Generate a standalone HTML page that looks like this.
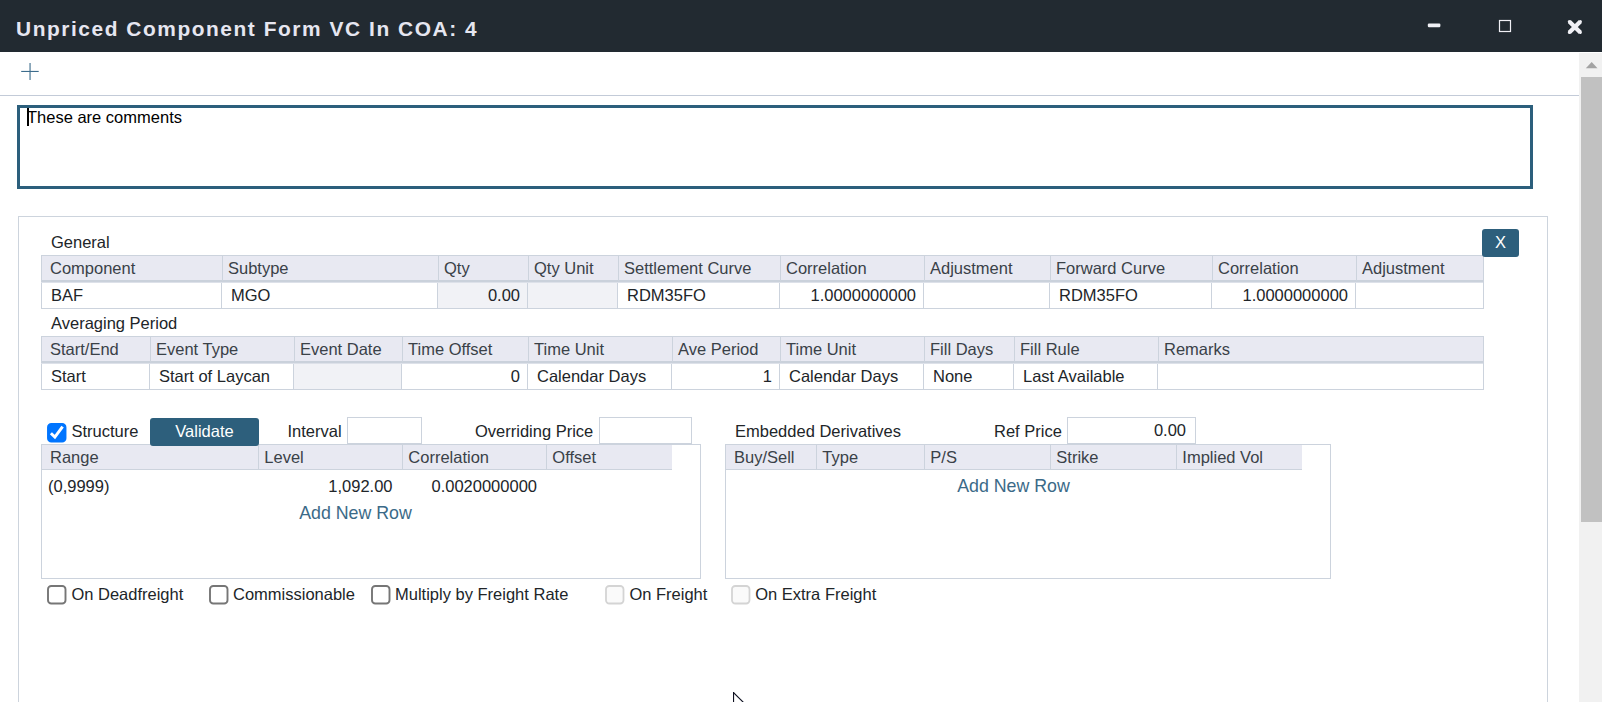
<!DOCTYPE html>
<html><head><meta charset="utf-8"><title>Unpriced Component Form VC In COA: 4</title>
<style>
html,body{margin:0;padding:0;}
body{width:1602px;height:702px;overflow:hidden;background:#fff;position:relative;font-family:"Liberation Sans",Arial,sans-serif;font-size:16.5px;color:#212529;}
.abs{position:absolute;}
.t{position:absolute;white-space:nowrap;line-height:20px;}
#titlebar{left:0;top:0;width:1602px;height:52px;background:#222a31;}
#title{left:16px;top:17px;font-size:20.9px;font-weight:bold;letter-spacing:1.555px;color:#e6e6f0;line-height:24px;}
#scroll{left:1579px;top:53px;width:23px;height:649px;background:#f1f1f1;}
#thumb{left:1581px;top:77px;width:21px;height:445px;background:#c1c1c1;}
#tline{left:0;top:95px;width:1579px;height:1px;background:#c3cbd8;}
#ta{left:17px;top:105px;width:1510px;height:78px;border:3px solid #2c5f7c;}
#panel{left:18px;top:216px;width:1528px;height:500px;border:1px solid #cdd4dd;}
table.g{position:absolute;border-collapse:collapse;table-layout:fixed;}
table.g th{background:#e8e9f2;font-weight:normal;text-align:left;color:#3a4148;border:1px solid #ccd3dd;border-bottom:3px solid #ccd3dd;height:23px;padding:0 0 0 8px;line-height:23px;white-space:nowrap;overflow:hidden;}
table.g td{border:1px solid #ccd3dd;height:25px;padding:0 0 0 9px;line-height:25px;color:#212529;white-space:nowrap;overflow:hidden;}
table.g td.r{text-align:right;padding:0 7px 0 0;}
table.g td.d{background:#f1f2f6;}
.btn{position:absolute;background:#2d5f7c;color:#fff;border-radius:3px;text-align:center;}
.inp{position:absolute;border:1px solid #ccd3dd;background:#fff;box-sizing:border-box;}
.box{position:absolute;border:1px solid #ccd3dd;box-sizing:border-box;}
.hd{position:absolute;background:#e8e9f2;height:24px;border-bottom:1px solid #ccd3dd;}
.hc{position:absolute;top:0;height:24px;line-height:25px;color:#3a4148;box-sizing:border-box;border-left:1px solid #ccd3dd;padding-left:5.3px;white-space:nowrap;}
.cb{position:absolute;width:15.6px;height:15.6px;border:1.9px solid #767676;border-radius:4px;background:#fff;box-sizing:content-box;}
.cb.dis{border-color:#cfcfcf;background:#f8f8f8;}
.cb.on{background:#0d6efd;border-color:#0d6efd;}
.th{color:#3a4148;}
.link{color:#3b6a88;font-size:17.8px;}
</style></head><body>
<div class="abs" id="titlebar"></div>
<div class="t" id="title">Unpriced Component Form VC In COA: 4</div>
<!-- window controls -->
<svg class="abs" style="left:1420px;top:10px" width="175" height="34" viewBox="1420 10 175 34">
<rect x="1427.8" y="23.5" width="12.6" height="3.8" rx="1.2" fill="#f0f0f5"/>
<rect x="1499.5" y="20.5" width="11" height="11" fill="none" stroke="#f0f0f5" stroke-width="1.2"/>
<path d="M1569.3 21.6 L1580.4 32.4 M1580.4 21.6 L1569.3 32.4" stroke="#f0f0f5" stroke-width="4.2" stroke-linecap="butt" fill="none"/><path d="M1569.3 21.6 L1580.4 32.4 M1580.4 21.6 L1569.3 32.4" stroke="#f0f0f5" stroke-width="3" stroke-linecap="round" fill="none"/>
</svg>
<div class="abs" id="scroll"></div>
<div class="abs" id="thumb"></div>
<svg class="abs" style="left:1583px;top:60px" width="16" height="10" viewBox="1583 60 16 10"><path d="M1585.8 68.3 L1591.7 62 L1597.5 68.3 Z" fill="#a3a3a3"/></svg>
<!-- toolbar -->
<svg class="abs" style="left:20px;top:62px" width="20" height="20" viewBox="20 62 20 20"><rect x="29.5" y="63" width="1.1" height="17" fill="#3c6c8c"/><rect x="21.2" y="70.9" width="17.5" height="1.1" fill="#3c6c8c"/></svg>
<div class="abs" id="tline"></div>
<div class="abs" id="ta"></div>
<div class="abs" style="left:27px;top:108px;width:1.6px;height:18px;background:#000"></div>
<div class="t" style="left:27px;top:107px;color:#000">These are comments</div>
<div class="abs" id="panel"></div>
<div class="t" style="left:51px;top:232px">General</div>
<div class="btn" style="left:1482px;top:229px;width:37px;height:28px;line-height:26px;z-index:3">X</div>
<div class="abs" style="left:41px;top:255px;width:1443px;height:25px;background:#e8e9f2;border-top:1px solid #ccd3dd;box-sizing:border-box"></div>
<div class="abs" style="left:41px;top:280px;width:1443px;height:3px;background:linear-gradient(#cad1db 0,#cad1db 70%,#dde1e9 70%)"></div>
<div class="abs" style="left:41px;top:308px;width:1443px;height:1px;background:#ccd3dd"></div>
<div class="abs" style="left:41px;top:255px;width:1px;height:26px;background:#ccd3dd"></div>
<div class="t th" style="left:50px;top:258px">Component</div>
<div class="abs" style="left:41px;top:283px;width:180px;height:25px;border-left:1px solid #ccd3dd;box-sizing:border-box;"></div>
<div class="t" style="left:51px;top:285px">BAF</div>
<div class="abs" style="left:222px;top:255px;width:1px;height:26px;background:#ccd3dd"></div>
<div class="t th" style="left:228px;top:258px">Subtype</div>
<div class="abs" style="left:221px;top:283px;width:216px;height:25px;border-left:1px solid #ccd3dd;box-sizing:border-box;"></div>
<div class="t" style="left:231px;top:285px">MGO</div>
<div class="abs" style="left:438px;top:255px;width:1px;height:26px;background:#ccd3dd"></div>
<div class="t th" style="left:444px;top:258px">Qty</div>
<div class="abs" style="left:437px;top:283px;width:90px;height:25px;border-left:1px solid #ccd3dd;box-sizing:border-box;background:#f1f2f6;"></div>
<div class="t" style="left:437px;top:285px;width:83px;text-align:right">0.00</div>
<div class="abs" style="left:528px;top:255px;width:1px;height:26px;background:#ccd3dd"></div>
<div class="t th" style="left:534px;top:258px">Qty Unit</div>
<div class="abs" style="left:527px;top:283px;width:90px;height:25px;border-left:1px solid #ccd3dd;box-sizing:border-box;background:#f1f2f6;"></div>
<div class="abs" style="left:618px;top:255px;width:1px;height:26px;background:#ccd3dd"></div>
<div class="t th" style="left:624px;top:258px">Settlement Curve</div>
<div class="abs" style="left:617px;top:283px;width:162px;height:25px;border-left:1px solid #ccd3dd;box-sizing:border-box;"></div>
<div class="t" style="left:627px;top:285px">RDM35FO</div>
<div class="abs" style="left:780px;top:255px;width:1px;height:26px;background:#ccd3dd"></div>
<div class="t th" style="left:786px;top:258px">Correlation</div>
<div class="abs" style="left:779px;top:283px;width:144px;height:25px;border-left:1px solid #ccd3dd;box-sizing:border-box;"></div>
<div class="t" style="left:779px;top:285px;width:137px;text-align:right">1.0000000000</div>
<div class="abs" style="left:924px;top:255px;width:1px;height:26px;background:#ccd3dd"></div>
<div class="t th" style="left:930px;top:258px">Adjustment</div>
<div class="abs" style="left:923px;top:283px;width:126px;height:25px;border-left:1px solid #ccd3dd;box-sizing:border-box;"></div>
<div class="abs" style="left:1050px;top:255px;width:1px;height:26px;background:#ccd3dd"></div>
<div class="t th" style="left:1056px;top:258px">Forward Curve</div>
<div class="abs" style="left:1049px;top:283px;width:162px;height:25px;border-left:1px solid #ccd3dd;box-sizing:border-box;"></div>
<div class="t" style="left:1059px;top:285px">RDM35FO</div>
<div class="abs" style="left:1212px;top:255px;width:1px;height:26px;background:#ccd3dd"></div>
<div class="t th" style="left:1218px;top:258px">Correlation</div>
<div class="abs" style="left:1211px;top:283px;width:144px;height:25px;border-left:1px solid #ccd3dd;box-sizing:border-box;"></div>
<div class="t" style="left:1211px;top:285px;width:137px;text-align:right">1.0000000000</div>
<div class="abs" style="left:1356px;top:255px;width:1px;height:26px;background:#ccd3dd"></div>
<div class="t th" style="left:1362px;top:258px">Adjustment</div>
<div class="abs" style="left:1355px;top:283px;width:128px;height:25px;border-left:1px solid #ccd3dd;box-sizing:border-box;"></div>
<div class="abs" style="left:1483px;top:255px;width:1px;height:54px;background:#ccd3dd"></div>
<div class="t" style="left:51px;top:313px">Averaging Period</div>
<div class="abs" style="left:41px;top:336px;width:1443px;height:25px;background:#e8e9f2;border-top:1px solid #ccd3dd;box-sizing:border-box"></div>
<div class="abs" style="left:41px;top:361px;width:1443px;height:3px;background:linear-gradient(#cad1db 0,#cad1db 70%,#dde1e9 70%)"></div>
<div class="abs" style="left:41px;top:389px;width:1443px;height:1px;background:#ccd3dd"></div>
<div class="abs" style="left:41px;top:336px;width:1px;height:26px;background:#ccd3dd"></div>
<div class="t th" style="left:50px;top:339px">Start/End</div>
<div class="abs" style="left:41px;top:364px;width:108px;height:25px;border-left:1px solid #ccd3dd;box-sizing:border-box;"></div>
<div class="t" style="left:51px;top:366px">Start</div>
<div class="abs" style="left:150px;top:336px;width:1px;height:26px;background:#ccd3dd"></div>
<div class="t th" style="left:156px;top:339px">Event Type</div>
<div class="abs" style="left:149px;top:364px;width:144px;height:25px;border-left:1px solid #ccd3dd;box-sizing:border-box;"></div>
<div class="t" style="left:159px;top:366px">Start of Laycan</div>
<div class="abs" style="left:294px;top:336px;width:1px;height:26px;background:#ccd3dd"></div>
<div class="t th" style="left:300px;top:339px">Event Date</div>
<div class="abs" style="left:293px;top:364px;width:108px;height:25px;border-left:1px solid #ccd3dd;box-sizing:border-box;background:#f1f2f6;"></div>
<div class="abs" style="left:402px;top:336px;width:1px;height:26px;background:#ccd3dd"></div>
<div class="t th" style="left:408px;top:339px">Time Offset</div>
<div class="abs" style="left:401px;top:364px;width:126px;height:25px;border-left:1px solid #ccd3dd;box-sizing:border-box;"></div>
<div class="t" style="left:401px;top:366px;width:119px;text-align:right">0</div>
<div class="abs" style="left:528px;top:336px;width:1px;height:26px;background:#ccd3dd"></div>
<div class="t th" style="left:534px;top:339px">Time Unit</div>
<div class="abs" style="left:527px;top:364px;width:144px;height:25px;border-left:1px solid #ccd3dd;box-sizing:border-box;"></div>
<div class="t" style="left:537px;top:366px">Calendar Days</div>
<div class="abs" style="left:672px;top:336px;width:1px;height:26px;background:#ccd3dd"></div>
<div class="t th" style="left:678px;top:339px">Ave Period</div>
<div class="abs" style="left:671px;top:364px;width:108px;height:25px;border-left:1px solid #ccd3dd;box-sizing:border-box;"></div>
<div class="t" style="left:671px;top:366px;width:101px;text-align:right">1</div>
<div class="abs" style="left:780px;top:336px;width:1px;height:26px;background:#ccd3dd"></div>
<div class="t th" style="left:786px;top:339px">Time Unit</div>
<div class="abs" style="left:779px;top:364px;width:144px;height:25px;border-left:1px solid #ccd3dd;box-sizing:border-box;"></div>
<div class="t" style="left:789px;top:366px">Calendar Days</div>
<div class="abs" style="left:924px;top:336px;width:1px;height:26px;background:#ccd3dd"></div>
<div class="t th" style="left:930px;top:339px">Fill Days</div>
<div class="abs" style="left:923px;top:364px;width:90px;height:25px;border-left:1px solid #ccd3dd;box-sizing:border-box;"></div>
<div class="t" style="left:933px;top:366px">None</div>
<div class="abs" style="left:1014px;top:336px;width:1px;height:26px;background:#ccd3dd"></div>
<div class="t th" style="left:1020px;top:339px">Fill Rule</div>
<div class="abs" style="left:1013px;top:364px;width:144px;height:25px;border-left:1px solid #ccd3dd;box-sizing:border-box;"></div>
<div class="t" style="left:1023px;top:366px">Last Available</div>
<div class="abs" style="left:1158px;top:336px;width:1px;height:26px;background:#ccd3dd"></div>
<div class="t th" style="left:1164px;top:339px">Remarks</div>
<div class="abs" style="left:1157px;top:364px;width:326px;height:25px;border-left:1px solid #ccd3dd;box-sizing:border-box;"></div>
<div class="abs" style="left:1483px;top:336px;width:1px;height:54px;background:#ccd3dd"></div>
<!-- structure row -->
<svg class="abs" style="left:46px;top:422px" width="22" height="22"><rect x="2" y="2" width="17.5" height="17.5" rx="3.3" fill="#0075ff" stroke="#0075ff" stroke-width="1.9"/></svg>
<svg class="abs" style="left:47px;top:423px" width="20" height="20" viewBox="47 423 20 20"><path d="M50.9 433.2 L54.9 437.1 L62.6 426.7" stroke="#fff" stroke-width="3" fill="none"/></svg>
<div class="t" style="left:71.4px;top:421.3px">Structure</div>
<div class="btn" style="left:150px;top:418px;width:109px;height:28px;line-height:27px;z-index:2">Validate</div>
<div class="t" style="left:287.5px;top:421px">Interval</div>
<div class="inp" style="left:347px;top:417px;width:75px;height:27px"></div>
<div class="t" style="left:475px;top:421px">Overriding Price</div>
<div class="inp" style="left:599px;top:417px;width:93px;height:27px"></div>
<div class="t" style="left:735px;top:421px">Embedded Derivatives</div>
<div class="t" style="left:994px;top:421px">Ref Price</div>
<div class="inp" style="left:1067px;top:417px;width:129px;height:27px"></div>
<div class="t" style="left:1100px;top:420px;width:86px;text-align:right">0.00</div>
<!-- grid 1 -->
<div class="box" style="left:41px;top:444px;width:660px;height:135px"></div>
<div class="hd" style="left:42px;top:445px;width:630px">
<div class="hc" style="left:0;width:216px;border-left:none;padding-left:8px">Range</div>
<div class="hc" style="left:216px;width:144px">Level</div>
<div class="hc" style="left:360px;width:144px">Correlation</div>
<div class="hc" style="left:504px;width:126px">Offset</div>
</div>
<div class="t" style="left:48px;top:476px">(0,9999)</div>
<div class="t" style="left:292.5px;top:476px;width:100px;text-align:right">1,092.00</div>
<div class="t" style="left:417px;top:476px;width:120px;text-align:right">0.0020000000</div>
<div class="t link" style="left:255.5px;top:503px;width:200px;text-align:center">Add New Row</div>
<!-- grid 2 -->
<div class="box" style="left:725px;top:444px;width:606px;height:135px"></div>
<div class="hd" style="left:726px;top:445px;width:576px">
<div class="hc" style="left:0;width:90px;border-left:none;padding-left:8px">Buy/Sell</div>
<div class="hc" style="left:90px;width:108px">Type</div>
<div class="hc" style="left:198px;width:126px">P/S</div>
<div class="hc" style="left:324px;width:126px">Strike</div>
<div class="hc" style="left:450px;width:126px">Implied Vol</div>
</div>
<div class="t link" style="left:913.5px;top:476px;width:200px;text-align:center">Add New Row</div>
<!-- bottom checkboxes -->
<svg class="abs" style="left:46px;top:584px" width="22" height="22"><rect x="2" y="2" width="17.5" height="17.5" rx="3.3" fill="#fff" stroke="#767676" stroke-width="1.9"/></svg><div class="t" style="left:71.4px;top:584px">On Deadfreight</div>
<svg class="abs" style="left:208px;top:584px" width="22" height="22"><rect x="2" y="2" width="17.5" height="17.5" rx="3.3" fill="#fff" stroke="#767676" stroke-width="1.9"/></svg><div class="t" style="left:233px;top:584px">Commissionable</div>
<svg class="abs" style="left:370px;top:584px" width="22" height="22"><rect x="2" y="2" width="17.5" height="17.5" rx="3.3" fill="#fff" stroke="#767676" stroke-width="1.9"/></svg><div class="t" style="left:395px;top:584px">Multiply by Freight Rate</div>
<svg class="abs" style="left:604px;top:584px" width="22" height="22"><rect x="2" y="2" width="17.5" height="17.5" rx="3.3" fill="#fafafa" stroke="#d4d4d4" stroke-width="1.8"/></svg><div class="t" style="left:629.4px;top:584px">On Freight</div>
<svg class="abs" style="left:730px;top:584px" width="22" height="22"><rect x="2" y="2" width="17.5" height="17.5" rx="3.3" fill="#fafafa" stroke="#d4d4d4" stroke-width="1.8"/></svg><div class="t" style="left:755.2px;top:584px">On Extra Freight</div>
<!-- cursor -->
<svg class="abs" style="left:730px;top:688px" width="18" height="14" viewBox="730 688 18 14"><rect x="733" y="692" width="1.1" height="10" fill="#0e1020"/><path d="M733.3 692.3 L744 703" stroke="#0e1020" stroke-width="1.15" fill="none"/></svg>
</body></html>
